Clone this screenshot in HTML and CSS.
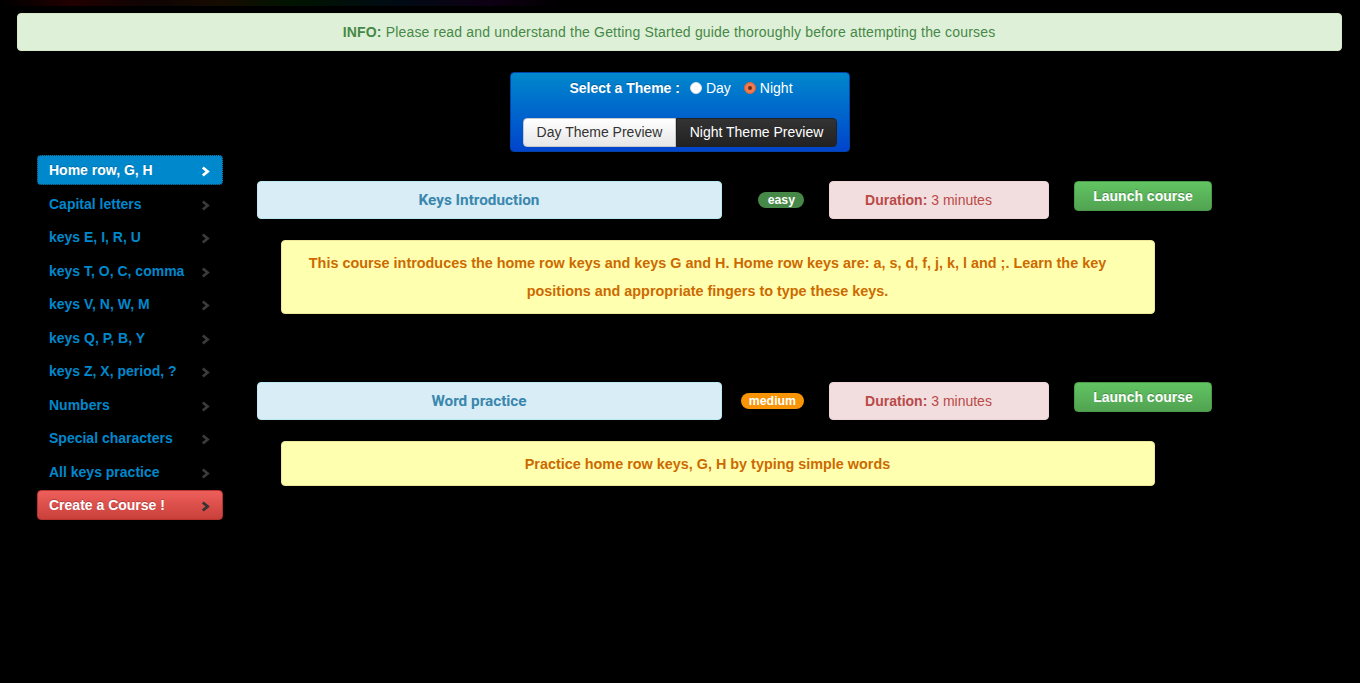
FILE: index.html
```html
<!DOCTYPE html>
<html>
<head>
<meta charset="utf-8">
<title>Typing courses</title>
<link rel="stylesheet" href="styles.css">
</head>
<body>
<div class="topglow"></div>
<div class="alert info"><b>INFO:</b> Please read and understand the Getting Started guide thoroughly before attempting the courses</div>

<div class="theme">
  <div class="theme-line">
    <span class="theme-label">Select a Theme :</span>
    <span class="radio"></span><span class="radio-text">Day</span>
    <span class="radio checked"></span><span class="radio-text">Night</span>
  </div>
  <div class="btn-group">
    <span class="tbtn day">Day Theme Preview</span><span class="tbtn night">Night Theme Preview</span>
  </div>
</div>

<div class="layout">
  <ul class="sidebar">
    <li class="item active"><span>Home row, G, H</span><svg class="chev" viewBox="0 0 9 11" width="9" height="11"><polyline points="1.8,1.5 6.6,5.5 1.8,9.5"/></svg></li>
    <li class="item"><span>Capital letters</span><svg class="chev" viewBox="0 0 9 11" width="9" height="11"><polyline points="1.8,1.5 6.6,5.5 1.8,9.5"/></svg></li>
    <li class="item"><span>keys E, I, R, U</span><svg class="chev" viewBox="0 0 9 11" width="9" height="11"><polyline points="1.8,1.5 6.6,5.5 1.8,9.5"/></svg></li>
    <li class="item"><span>keys T, O, C, comma</span><svg class="chev" viewBox="0 0 9 11" width="9" height="11"><polyline points="1.8,1.5 6.6,5.5 1.8,9.5"/></svg></li>
    <li class="item"><span>keys V, N, W, M</span><svg class="chev" viewBox="0 0 9 11" width="9" height="11"><polyline points="1.8,1.5 6.6,5.5 1.8,9.5"/></svg></li>
    <li class="item"><span>keys Q, P, B, Y</span><svg class="chev" viewBox="0 0 9 11" width="9" height="11"><polyline points="1.8,1.5 6.6,5.5 1.8,9.5"/></svg></li>
    <li class="item"><span>keys Z, X, period, ?</span><svg class="chev" viewBox="0 0 9 11" width="9" height="11"><polyline points="1.8,1.5 6.6,5.5 1.8,9.5"/></svg></li>
    <li class="item"><span>Numbers</span><svg class="chev" viewBox="0 0 9 11" width="9" height="11"><polyline points="1.8,1.5 6.6,5.5 1.8,9.5"/></svg></li>
    <li class="item"><span>Special characters</span><svg class="chev" viewBox="0 0 9 11" width="9" height="11"><polyline points="1.8,1.5 6.6,5.5 1.8,9.5"/></svg></li>
    <li class="item"><span>All keys practice</span><svg class="chev" viewBox="0 0 9 11" width="9" height="11"><polyline points="1.8,1.5 6.6,5.5 1.8,9.5"/></svg></li>
    <li class="item create"><span>Create a Course !</span><svg class="chev" viewBox="0 0 9 11" width="9" height="11"><polyline points="1.8,1.5 6.6,5.5 1.8,9.5"/></svg></li>
  </ul>

  <div class="main">
    <div class="course">
      <div class="row">
        <div class="alert title">Keys Introduction</div>
        <div class="badge-col"><span class="badge easy">easy</span></div>
        <div class="alert duration"><b>Duration:</b> 3 minutes</div>
        <span class="launch">Launch course</span>
      </div>
      <div class="alert desc">This course introduces the home row keys and keys G and H. Home row keys are: a, s, d, f, j, k, l and ;. Learn the key positions and appropriate fingers to type these keys.</div>
    </div>
    <div class="course second">
      <div class="row">
        <div class="alert title">Word practice</div>
        <div class="badge-col"><span class="badge medium">medium</span></div>
        <div class="alert duration"><b>Duration:</b> 3 minutes</div>
        <span class="launch">Launch course</span>
      </div>
      <div class="alert desc">Practice home row keys, G, H by typing simple words</div>
    </div>
  </div>
</div>
</body>
</html>
```

FILE: styles.css
```css
html, body {
  margin: 0;
  padding: 0;
  background: #000;
  font-family: "Liberation Sans", Arial, sans-serif;
  font-size: 14px;
}

.topglow {
  height: 6px;
  width: 560px;
  background: linear-gradient(90deg, rgba(0,0,0,0) 0px, rgba(60,0,0,0.55) 70px, rgba(40,10,10,0.4) 150px, rgba(50,25,0,0.45) 220px, rgba(0,40,0,0.5) 290px, rgba(0,20,40,0.5) 400px, rgba(30,0,40,0.5) 490px, rgba(0,0,0,0) 560px);
}

.alert {
  box-sizing: border-box;
  border-radius: 4px;
  padding: 0 35px 0 14px;
  text-align: center;
}

.info {
  margin: 7px 18px 0 17px;
  height: 38px;
  line-height: 37px;
  background: #dff0d8;
  color: #468847;
  border: 1px solid #d6e9c6;
  letter-spacing: 0.17px;
}

.theme {
  box-sizing: border-box;
  width: 340px;
  height: 80px;
  margin: 21px auto 0;
  border-radius: 4px;
  background: linear-gradient(#0088cc, #0044cc);
  border: 1px solid #0044aa;
  padding-top: 5px;
}

.theme-line {
  display: flex;
  align-items: center;
  justify-content: center;
  height: 20px;
  color: #fff;
  padding-left: 2px;
}

.theme-label {
  font-weight: bold;
  margin-right: 10px;
  text-shadow: 0 -1px 0 rgba(0,0,0,0.25);
}

.radio {
  box-sizing: border-box;
  width: 12px;
  height: 12px;
  border-radius: 50%;
  background: #fff;
  border: 1px solid #ddd;
  margin-right: 4px;
  position: relative;
}

.radio.checked {
  background: #ef7b4e;
  border-color: #d8643a;
  margin-left: 13px;
}

.radio.checked::after {
  content: "";
  position: absolute;
  left: 3px;
  top: 3px;
  width: 4px;
  height: 4px;
  border-radius: 50%;
  background: #6e2e18;
}

.radio-text {
  color: #fff;
}

.btn-group {
  display: flex;
  margin: 20px 0 0 12px;
}

.tbtn {
  box-sizing: border-box;
  height: 29px;
  line-height: 27px;
  padding: 0 12px;
  font-size: 14px;
}

.tbtn.day {
  width: 153px;
  background: linear-gradient(#ffffff, #e6e6e6);
  color: #333;
  border: 1px solid #c8c8c8;
  border-radius: 4px 0 0 4px;
  text-align: center;
}

.tbtn.night {
  width: 161px;
  background: linear-gradient(#333333, #222222);
  color: #fff;
  border: 1px solid #222;
  border-radius: 0 4px 4px 0;
  text-align: center;
}

.layout {
  display: flex;
  align-items: flex-start;
  margin-top: 3px;
  padding-left: 37px;
}

.sidebar {
  list-style: none;
  margin: 0;
  padding: 0;
  width: 186px;
}

.item {
  box-sizing: border-box;
  height: 30px;
  margin-bottom: 3.5px;
  padding: 0 12px 0 11px;
  display: flex;
  align-items: center;
  justify-content: space-between;
  color: #0088cc;
  font-weight: bold;
  border-radius: 4px;
  border: 1px solid transparent;
}

.chev {
  fill: none;
  stroke: #3a3a3a;
  stroke-width: 2.8;
  stroke-linecap: butt;
  stroke-linejoin: miter;
  margin-top: 3px;
}

.item.active {
  background: #0088cc;
  color: #fff;
  border: 1px dotted #1c2a33;
  text-shadow: 0 -1px 0 rgba(0,0,0,0.2);
}

.item.active .chev {
  stroke: #fff;
  margin-top: 2px;
}

.item.create {
  background: linear-gradient(#ee5f5b, #c9403b);
  color: #fff;
  border: 1px solid #b8332e;
  text-shadow: 0 -1px 0 rgba(0,0,0,0.25);
}

.item.create .chev {
  stroke: #333;
  margin-top: 2px;
}

.main {
  margin-left: 34px;
  padding-top: 26px;
}

.course.second {
  margin-top: 68px;
}

.row {
  display: flex;
  align-items: flex-start;
}

.title {
  width: 465px;
  height: 38px;
  line-height: 36px;
  background: #d9edf7;
  border: 1px solid #bce8f1;
  color: #3a87ad;
  font-family: Roboto, "Liberation Sans", sans-serif;
  font-weight: bold;
  font-size: 15.3px;
}

.badge-col {
  width: 82px;
  height: 38px;
  display: flex;
  align-items: center;
  justify-content: flex-end;
}

.badge {
  box-sizing: border-box;
  height: 16px;
  line-height: 16px;
  padding: 0 9px;
  border-radius: 9px;
  color: #fff;
  font-weight: bold;
  font-size: 12.3px;
}

.badge.easy {
  background: #468847;
  padding: 0 9px 0 10px;
}

.badge.medium {
  background: #f89406;
  padding: 0 8px;
}

.duration {
  width: 220px;
  height: 38px;
  line-height: 36px;
  margin-left: 25px;
  background: #f2dede;
  border: 1px solid #eed3d7;
  color: #b94a48;
}

.launch {
  box-sizing: border-box;
  width: 138px;
  height: 30px;
  line-height: 28px;
  margin-left: 25px;
  text-align: center;
  color: #fff;
  font-weight: bold;
  border-radius: 4px;
  background: linear-gradient(#62c462, #51a351);
  border: 1px solid #4a9a4a;
  text-shadow: 0 -1px 0 rgba(0,0,0,0.25);
}

.desc {
  width: 874px;
  margin: 21px 0 0 24px;
  padding: 8px 35px 8px 14px;
  line-height: 28px;
  background: #ffffb0;
  border: 1px solid #eee69a;
  color: #cc6a00;
  font-weight: bold;
  font-size: 14.4px;
}

.second .desc {
  padding-top: 7.5px;
  padding-bottom: 7.5px;
}
```
